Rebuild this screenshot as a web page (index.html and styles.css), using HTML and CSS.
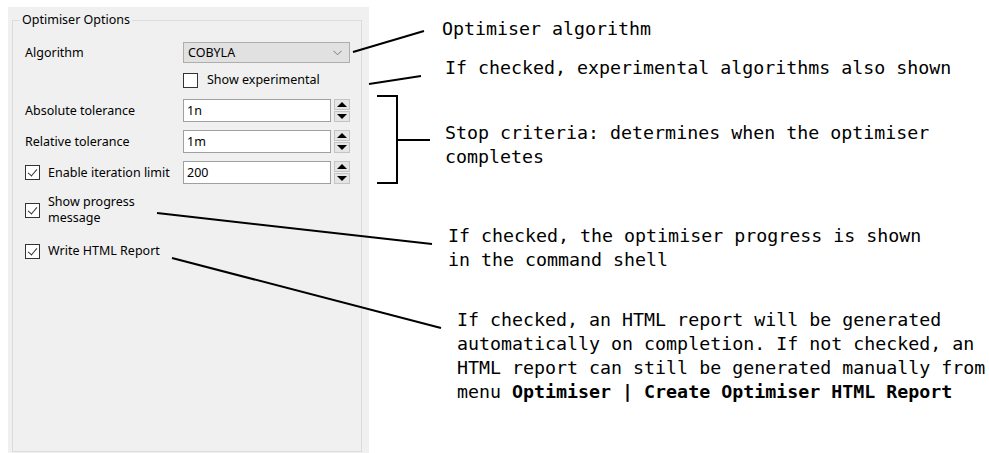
FILE: index.html
```html
<!DOCTYPE html>
<html>
<head>
<meta charset="utf-8">
<link rel="stylesheet" href="styles.css">
</head>
<body>
<div class="page">
  <div class="panel">
    <div class="group">
      <span class="group-title">Optimiser Options</span>
      <div class="row r-algo">
        <span class="label">Algorithm</span>
        <div class="combo"><span>COBYLA</span>
          <svg class="chev" width="9" height="6" viewBox="0 0 9 6"><path d="M0.5 0.8 L4.5 4.8 L8.5 0.8" fill="none" stroke="#777" stroke-width="1"/></svg>
        </div>
      </div>
      <div class="row r-exp">
        <span class="label"></span>
        <span class="cb"></span><span class="cb-text exp">Show experimental</span>
      </div>
      <div class="row r-field">
        <span class="label">Absolute tolerance</span>
        <div class="input">1n</div>
        <div class="spin"><span class="up"><i></i></span><span class="down"><i></i></span></div>
      </div>
      <div class="row r-field">
        <span class="label">Relative tolerance</span>
        <div class="input">1m</div>
        <div class="spin"><span class="up"><i></i></span><span class="down"><i></i></span></div>
      </div>
      <div class="row r-field">
        <span class="label label-cb"><span class="cb checked"></span><span class="cb-text">Enable iteration limit</span></span>
        <div class="input">200</div>
        <div class="spin"><span class="up"><i></i></span><span class="down"><i></i></span></div>
      </div>
      <div class="row r-progress">
        <span class="cb checked"></span><span class="cb-text two">Show progress<br>message</span>
      </div>
      <div class="row r-html">
        <span class="cb checked"></span><span class="cb-text">Write HTML Report</span>
      </div>
    </div>
  </div>

  <svg class="lines" width="989" height="453" viewBox="0 0 989 453">
    <g stroke="#000" stroke-width="2" fill="none" stroke-linecap="butt">
      <line x1="353" y1="52" x2="424" y2="31"/>
      <line x1="369" y1="84" x2="421" y2="76"/>
      <polyline points="377,96 397,96 397,183 377,183"/>
      <line x1="397" y1="140" x2="430" y2="140"/>
      <line x1="157" y1="213" x2="432" y2="244"/>
      <line x1="172" y1="258" x2="441" y2="328"/>
    </g>
  </svg>

  <div class="note n1">Optimiser algorithm</div>
  <div class="note n2">If checked, experimental algorithms also shown</div>
  <div class="note n3">Stop criteria: determines when the optimiser<br>completes</div>
  <div class="note n4">If checked, the optimiser progress is shown<br>in the command shell</div>
  <div class="note n5">If checked, an HTML report will be generated<br>automatically on completion. If not checked, an<br>HTML report can still be generated manually from<br>menu <b>Optimiser | Create Optimiser HTML Report</b></div>
</div>
</body>
</html>
```

FILE: styles.css
```css
* { box-sizing: border-box; }
html, body { margin: 0; padding: 0; background: #fff; }
.page {
  position: relative;
  width: 989px;
  height: 453px;
  overflow: hidden;
  font-family: "Noto Sans", "Open Sans", sans-serif;
  font-size: 12.5px;
  color: #000;
}
.panel {
  margin: 7px 0 0 8px;
  width: 361px;
  height: 446px;
  background: #f0f0f0;
  padding: 13px 7px 0 4px;
}
.group {
  position: relative;
  border: 1px solid #dcdcdc;
  height: 432px;
  padding: 21px 11px 0 12px;
}
.group-title {
  position: absolute;
  left: 7px;
  top: -9px;
  padding: 0 2px;
  background: #f0f0f0;
  line-height: 16px;
}
.row { display: flex; align-items: center; }
.label { width: 158px; flex: none; line-height: 16px; }
.label-cb { display: flex; align-items: center; }
.r-algo { height: 21px; }
.r-exp { height: 18px; margin-top: 8px; }
.r-field { height: 23px; margin-top: 8px; }
.r-exp + .r-field { margin-top: 10px; }
.r-progress { height: 32px; margin-top: 10px; }
.r-html { height: 18px; margin-top: 16px; }

.combo {
  flex: 1;
  height: 21px;
  background: #e1e1e1;
  border: 1px solid #adadad;
  display: flex;
  align-items: center;
  justify-content: space-between;
  padding: 0 7px 0 4px;
}
.chev { display: block; }
.cb {
  width: 15px;
  height: 15px;
  flex: none;
  border: 1px solid #333;
  background: #fff;
  position: relative;
}
.cb.checked::after {
  content: "";
  position: absolute;
  left: 4px;
  top: 1px;
  width: 4px;
  height: 8px;
  border-right: 1.3px solid #333;
  border-bottom: 1.3px solid #333;
  transform: rotate(40deg);
}
.cb-text { margin-left: 8px; line-height: 16px; }
.cb-text.exp { margin-left: 9px; }
.input {
  width: 148px;
  height: 23px;
  flex: none;
  background: #fff;
  border: 1px solid #a0a0a0;
  padding: 0 3px;
  line-height: 21px;
}
.spin {
  margin-left: 3px;
  width: 16px;
  height: 23px;
  display: flex;
  flex-direction: column;
  gap: 1px;
}
.spin span {
  flex: 1;
  background: #e5e5e5;
  border: 1px solid #c4c4c4;
  display: flex;
  align-items: center;
  justify-content: center;
}
.spin i { width: 0; height: 0; border-left: 5px solid transparent; border-right: 5px solid transparent; }
.spin .up i { border-bottom: 5px solid #000; }
.spin .down i { border-top: 5px solid #000; }

.lines { position: absolute; left: 0; top: 0; pointer-events: none; }
.note {
  position: absolute;
  font-family: "DejaVu Sans Mono", "Liberation Mono", monospace;
  font-size: 18.3px;
  line-height: 24px;
  white-space: nowrap;
  color: #000;
}
.note b { font-weight: bold; }
.n1 { left: 442px; top: 17px; }
.n2 { left: 445px; top: 56px; }
.n3 { left: 445px; top: 121px; }
.n4 { left: 448px; top: 224px; }
.n5 { left: 457px; top: 308px; }
```
